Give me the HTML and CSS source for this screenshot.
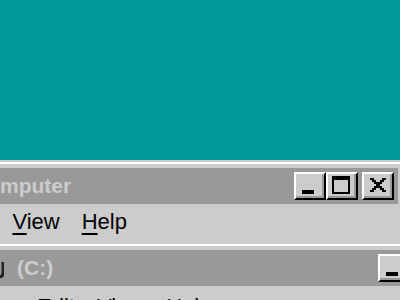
FILE: index.html
```html
<!DOCTYPE html>
<html>
<head>
<meta charset="utf-8">
<link rel="stylesheet" href="styles.css">
</head>
<body>
<div class="desktop">
  <div class="win win1">
    <div class="titlebar">
      <span class="title t1">My Computer</span>
      <div class="btns">
        <div class="cbtn"><svg width="28" height="24" shape-rendering="crispEdges"><rect x="6" y="16" width="12" height="4" fill="#000"/></svg></div>
        <div class="cbtn"><svg width="28" height="24" shape-rendering="crispEdges"><rect x="4" y="2" width="18" height="4" fill="#000"/><rect x="4" y="2" width="2" height="18" fill="#000"/><rect x="20" y="2" width="2" height="18" fill="#000"/><rect x="4" y="18" width="18" height="2" fill="#000"/></svg></div>
        <div class="cbtn close"><svg width="28" height="24" shape-rendering="crispEdges" fill="#000"><rect x="6" y="4" width="4" height="2"/><rect x="18" y="4" width="4" height="2"/><rect x="8" y="6" width="4" height="2"/><rect x="16" y="6" width="4" height="2"/><rect x="10" y="8" width="8" height="2"/><rect x="12" y="10" width="4" height="2"/><rect x="10" y="12" width="8" height="2"/><rect x="8" y="14" width="4" height="2"/><rect x="16" y="14" width="4" height="2"/><rect x="6" y="16" width="4" height="2"/><rect x="18" y="16" width="4" height="2"/></svg></div>
      </div>
    </div>
    <div class="menubar m1">
      <span><u>F</u>ile</span>
      <span><u>E</u>dit</span>
      <span><u>V</u>iew</span>
      <span><u>H</u>elp</span>
    </div>
  </div>
  <div class="win win2">
    <div class="titlebar t2bar">
      <svg class="icon" width="20" height="20"><path d="M19 4 V15 Q19 19 15 19" fill="none" stroke="#222" stroke-width="3"/></svg>
      <span class="title t2">(C:)</span>
      <div class="btns">
        <div class="cbtn"><svg width="28" height="24" shape-rendering="crispEdges"><rect x="6" y="16" width="12" height="4" fill="#000"/></svg></div>
        <div class="cbtn"><svg width="28" height="24" shape-rendering="crispEdges"><rect x="4" y="2" width="18" height="4" fill="#000"/><rect x="4" y="2" width="2" height="18" fill="#000"/><rect x="20" y="2" width="2" height="18" fill="#000"/><rect x="4" y="18" width="18" height="2" fill="#000"/></svg></div>
        <div class="cbtn close"><svg width="28" height="24" shape-rendering="crispEdges" fill="#000"><rect x="6" y="4" width="4" height="2"/><rect x="18" y="4" width="4" height="2"/><rect x="8" y="6" width="4" height="2"/><rect x="16" y="6" width="4" height="2"/><rect x="10" y="8" width="8" height="2"/><rect x="12" y="10" width="4" height="2"/><rect x="10" y="12" width="8" height="2"/><rect x="8" y="14" width="4" height="2"/><rect x="16" y="14" width="4" height="2"/><rect x="6" y="16" width="4" height="2"/><rect x="18" y="16" width="4" height="2"/></svg></div>
      </div>
    </div>
    <div class="menubar m2">
      <span><u>E</u>dit</span>
      <span><u>V</u>iew</span>
      <span><u>H</u>elp</span>
    </div>
  </div>
</div>
</body>
</html>
```

FILE: styles.css
```css
html, body {
  margin: 0;
  padding: 0;
  overflow: hidden;
  width: 400px;
  height: 300px;
}

.desktop {
  position: relative;
  width: 400px;
  height: 300px;
  background: #009999;
  overflow: hidden;
  font-family: "Liberation Sans", Arial, sans-serif;
}

.win {
  position: absolute;
  box-sizing: border-box;
  background: #cccccc;
  border-top: 2px solid #cccccc;
  border-left: 2px solid #cccccc;
  border-right: 2px solid #000;
  border-bottom: 2px solid #000;
  box-shadow: inset 2px 2px #ffffff, inset -2px -2px #999999;
  padding: 6px;
}

.win1 {
  left: -130px;
  top: 160px;
  width: 536px;
  height: 300px;
}

.win2 {
  left: -48px;
  top: 242px;
  width: 538px;
  height: 200px;
}

.titlebar {
  height: 36px;
  background: #999999;
  display: flex;
  align-items: center;
  padding-right: 4px;
}

.win1 .titlebar {
  padding-left: 59px;
}

.t2bar {
  padding-left: 24px;
}

.icon {
  display: block;
  flex: none;
  margin-right: 13px;
}

.title {
  font-weight: bold;
  font-size: 21px;
  color: #cccccc;
  white-space: nowrap;
  flex: 1;
}

.btns {
  display: flex;
  align-items: center;
}

.cbtn {
  box-sizing: border-box;
  width: 32px;
  height: 28px;
  background: #cccccc;
  border-top: 2px solid #ffffff;
  border-left: 2px solid #ffffff;
  border-right: 2px solid #000000;
  border-bottom: 2px solid #000000;
  box-shadow: inset -2px -2px #999999;
}

.cbtn svg {
  display: block;
}

.cbtn.close {
  margin-left: 4px;
}

.menubar {
  display: flex;
  gap: 22px;
  height: 38px;
  box-sizing: border-box;
  padding-top: 5px;
  font-size: 22px;
  color: #000;
  white-space: nowrap;
}

.m1 {
  padding-left: 17px;
}

.m2 {
  padding-left: 77px;
  padding-top: 8px;
}

.menubar u {
  text-decoration: underline;
  text-decoration-thickness: 2px;
  text-underline-offset: 4px;
}
```
